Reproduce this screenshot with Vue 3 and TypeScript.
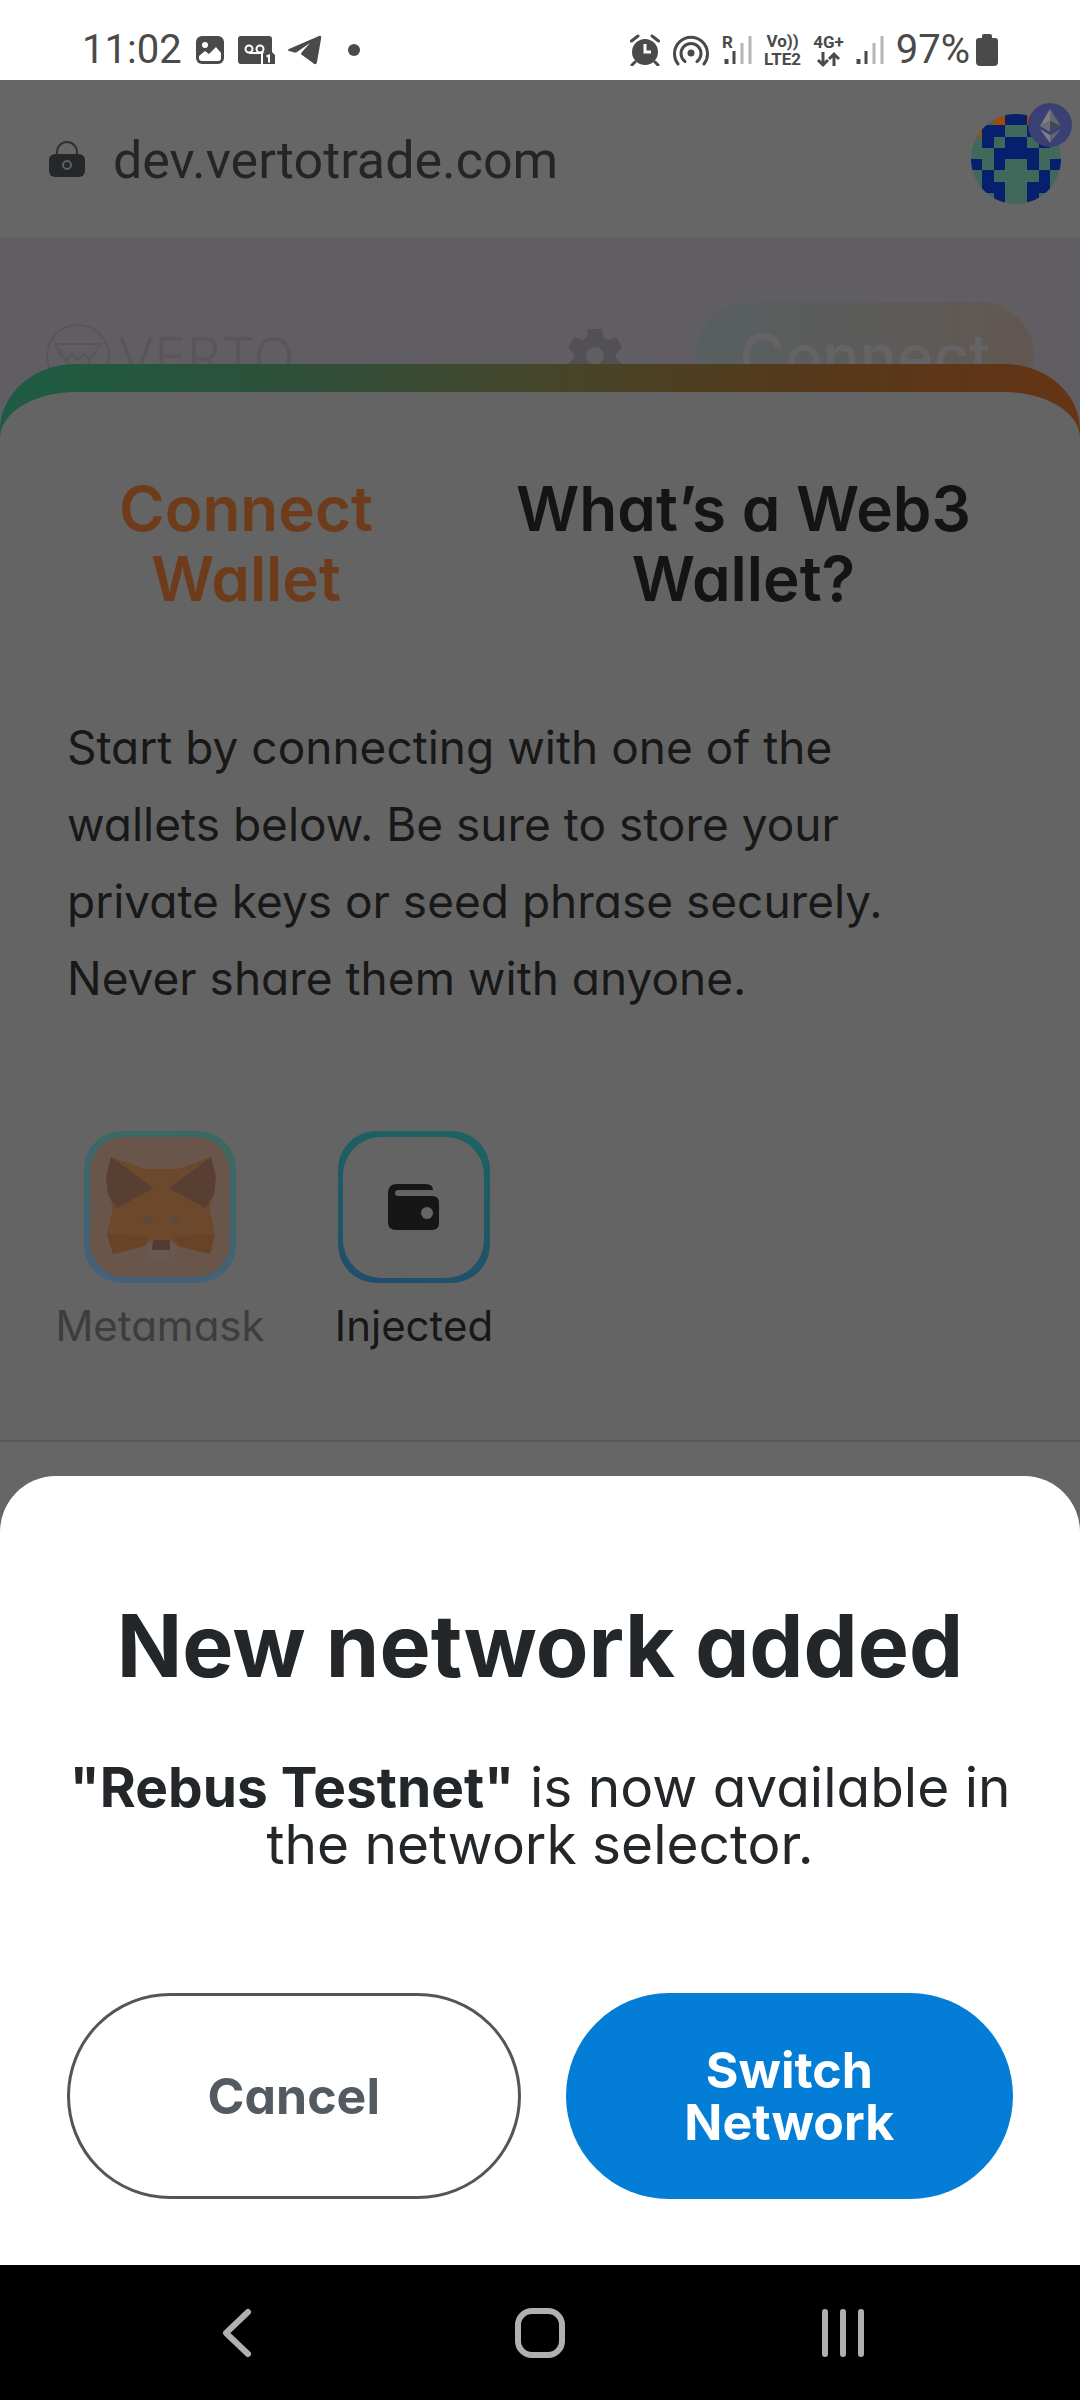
<script setup lang="ts">
import { ref } from 'vue'

type Tab = 'connect' | 'about'

const tab = ref<Tab>('connect')

// One character per cell: g = green, b = blue, o = orange
const identicon: string[] = [
  'ggobbogg',
  'obbggbbo',
  'gbgbbgbg',
  'ggbbbbgg',
  'bgbggbgb',
  'gbggggbg',
  'gbbggbbg',
  'ggbggbgg',
]
const cellColors: Record<string, string> = { g: '#42685b', b: '#06206e', o: '#a04a0b' }
const cells = identicon.flatMap((row, y) =>
  row.split('').map((c, x) => ({ x, y, fill: cellColors[c] })),
)
</script>

<template>
  <div class="screen">
    <header class="status">
      <div class="status-left">
        <span class="status-text">11:02</span>
        <svg width="30" height="30" viewBox="0 0 30 30" aria-hidden="true">
          <rect x="1" y="1" width="28" height="28" rx="6" fill="#4a4a4a" />
          <circle cx="10" cy="10" r="3" fill="#fff" />
          <path d="M4 21l6-5 4 3 7-7 5 6v5q0 3-3 3H7q-3 0-3-3z" fill="#fff" />
        </svg>
        <svg width="37" height="30" viewBox="0 0 37 30" aria-hidden="true">
          <rect x="0" y="1" width="34" height="28" rx="3" fill="#4a4a4a" />
          <circle cx="11" cy="14" r="3.500" fill="none" stroke="#fff" stroke-width="2" />
          <circle cx="22" cy="14" r="3.500" fill="none" stroke="#fff" stroke-width="2" />
          <path d="M11 18h12" stroke="#fff" stroke-width="2" />
          <path d="M23 30V17h14v13z" fill="#fff" />
          <path d="M25 19q0-2 2-2h7l3 3v9H25z" fill="#4a4a4a" />
          <path d="M28.500 21.500l2.500-1v7" fill="none" stroke="#fff" stroke-width="2" />
        </svg>
        <svg width="34" height="30" viewBox="0 0 34 30" aria-hidden="true">
          <path d="M1 14L31 1q3-1 2 3l-4 23q-1 4-4 1l-11-8q-2-1 0-3l8-9-13 9q-2 1-4 0l-4-1q-2-1 0-2z" fill="#4a4a4a" />
        </svg>
        <span class="dot"></span>
      </div>
      <div class="status-right">
        <svg width="30" height="32" viewBox="0 0 30 32" aria-hidden="true">
          <circle cx="15" cy="18" r="13" fill="#4a4a4a" />
          <path d="M1.500 7L8 2M28.500 7L22 2M5 28l-3 3M25 28l3 3" stroke="#4a4a4a" stroke-width="3" stroke-linecap="round" />
          <path d="M15 10v8h6" fill="none" stroke="#fff" stroke-width="3" />
        </svg>
        <svg width="38" height="32" viewBox="0 0 38 32" aria-hidden="true">
          <circle cx="19" cy="19" r="3.500" fill="#4a4a4a" />
          <g fill="none" stroke="#4a4a4a" stroke-width="3" stroke-linecap="round">
            <path d="M13 27.500a10 10 0 1 1 12 0" />
            <path d="M6 30a16.500 16.500 0 1 1 26 0" />
          </g>
        </svg>
        <svg class="signal" width="30" height="32" viewBox="0 0 30 32" aria-hidden="true">
          <path d="M4.500 25v5" stroke="#4a4a4a" stroke-width="4" />
          <path d="M12 17v13" stroke="#4a4a4a" stroke-width="3" />
          <path d="M20 9v21M28 2v28" stroke="#b5b5b5" stroke-width="3" />
          <text x="0" y="14" class="roam">R</text>
        </svg>
        <span class="tiny"><span>Vo))</span><span>LTE2</span></span>
        <span class="tiny">
          <span>4G+</span>
          <svg width="24" height="17" viewBox="0 0 24 17" aria-hidden="true">
            <path d="M7 1v13M2 9l5 5 5-5M18 15V3M13 8l5-5 5 5" fill="none" stroke="#4a4a4a" stroke-width="3" />
          </svg>
        </span>
        <svg class="signal" width="28" height="32" viewBox="0 0 28 32" aria-hidden="true">
          <path d="M2.500 25v5" stroke="#4a4a4a" stroke-width="4" />
          <path d="M10 17v13" stroke="#4a4a4a" stroke-width="3" />
          <path d="M18 9v21M26 2v28" stroke="#b5b5b5" stroke-width="3" />
        </svg>
        <span class="battery">
          <span class="status-text">97%</span>
          <svg width="22" height="32" viewBox="0 0 22 32" aria-hidden="true">
            <path d="M6 4V2q0-2 2-2h6q2 0 2 2v2h3q3 0 3 3v21q0 4-4 4H4q-4 0-4-4V7q0-3 3-3z" fill="#4a4a4a" />
          </svg>
        </span>
      </div>
    </header>

    <div class="browser">
      <svg width="36" height="37" viewBox="0 0 36 37" aria-hidden="true">
        <path d="M8 16v-4a10 10 0 0 1 20 0v4" fill="none" stroke="#2e3134" stroke-width="2" />
        <rect x="0" y="14" width="36" height="23" rx="6" fill="#25282b" />
        <ellipse cx="18" cy="25" rx="4" ry="4" fill="none" stroke="#5f6264" stroke-width="2" />
      </svg>
      <span class="url">dev.vertotrade.com</span>
      <button class="account" aria-label="Account">
        <svg class="identicon" width="90" height="90" viewBox="0 0 8 8" shape-rendering="crispEdges" aria-hidden="true">
          <rect v-for="c in cells" :key="`${c.x}-${c.y}`" :x="c.x" :y="c.y" width="1" height="1" :fill="c.fill" />
        </svg>
        <svg class="eth" width="44" height="44" viewBox="0 0 44 44" aria-hidden="true">
          <circle cx="22" cy="22" r="22" fill="#3a4074" />
          <path d="M22 6L12 23l10-5z" fill="#808080" />
          <path d="M22 6l11 17-11-5z" fill="#66676f" />
          <path d="M12 23l10-5v11z" fill="#6c6d76" />
          <path d="M33 23l-11-5v11z" fill="#44475c" />
          <path d="M12 26l10 6v8z" fill="#808080" />
          <path d="M33 26l-11 6v8z" fill="#62636e" />
        </svg>
      </button>
    </div>

    <main class="page">
      <div class="site-header">
        <span class="brand">
          <svg width="64" height="64" viewBox="0 0 64 64" fill="none" stroke="#58565a" stroke-width="2" aria-hidden="true">
            <circle cx="32" cy="32" r="31" />
            <path d="M9 20h46L32 54zM12 28l8 8 6-6 6 6 6-6 6 6" />
          </svg>
          <span>VERTO</span>
        </span>
        <button class="gear" aria-label="Settings">
          <svg width="54" height="54" viewBox="0 0 54 54" aria-hidden="true">
            <path
              d="M20 0h14l1 8 5 3 8-3 6 11-6 6v4l6 6-6 11-8-3-5 3-1 8H20l-1-8-5-3-8 3-6-11 6-6v-4l-6-6L6 8l8 3 5-3z"
              fill="#525056"
            />
            <circle cx="27" cy="27" r="9" fill="#5f5f60" />
          </svg>
        </button>
        <button class="connect">Connect</button>
      </div>

      <section class="modal">
        <div class="modal-body">
          <nav class="tabs">
            <button :class="{ active: tab === 'connect' }" @click="tab = 'connect'">Connect<br />Wallet</button>
            <button :class="{ active: tab === 'about' }" @click="tab = 'about'">What’s a Web3<br />Wallet?</button>
          </nav>
          <p class="intro">
            Start by connecting with one of the<br />wallets below. Be sure to store your<br />private keys or seed
            phrase securely.<br />Never share them with anyone.
          </p>
          <div class="wallets">
            <button class="wallet muted">
              <svg width="152" height="152" viewBox="0 0 152 152" aria-hidden="true">
                <defs>
                  <linearGradient id="metaEdge" x1="0.6" y1="0" x2="0.4" y2="1">
                    <stop offset="0" stop-color="#3b6962" />
                    <stop offset="1" stop-color="#43617b" />
                  </linearGradient>
                </defs>
                <rect width="152" height="152" rx="38" fill="url(#metaEdge)" />
                <rect x="6" y="6" width="140" height="140" rx="34" fill="#69554a" />
                <path d="M27 26l33 12h34l33-12 4 30-6 21 6 26-5 20-33-8-5 8H65l-5-8-31 8-6-20 6-26-6-21z" fill="#6c482d" />
                <path d="M27 26l42 31-36 20-9-13-2-18z" fill="#593f32" />
                <path d="M127 26L85 57l36 20 9-13 2-18z" fill="#593f32" />
                <path d="M23 103l42 2-5 10-31 8zM131 103l-42 2 5 10 32 8z" fill="#694328" />
                <path d="M60 115l8-6h18l8 6-4 12q-1 3-4 3H68q-3 0-4-3z" fill="#69584f" />
                <path d="M56 89l8-4 5 8zM98 89l-8-4-5 8z" fill="#594a40" />
                <path d="M69 109h17v10H68z" fill="#533b35" />
              </svg>
              <span>Metamask</span>
            </button>
            <button class="wallet">
              <svg width="152" height="152" viewBox="0 0 152 152" aria-hidden="true">
                <defs>
                  <linearGradient id="injEdge" x1="0.6" y1="0" x2="0.4" y2="1">
                    <stop offset="0" stop-color="#1d6261" />
                    <stop offset="1" stop-color="#214f6b" />
                  </linearGradient>
                </defs>
                <rect width="152" height="152" rx="38" fill="url(#injEdge)" />
                <rect x="5" y="6" width="141" height="141" rx="38" fill="#646464" />
                <path
                  d="M59 53h28q8 0 8 6H60q-3 0-3 3t3 3h34q7 0 7 7v20q0 7-7 7H58q-8 0-8-8V62q0-9 9-9z"
                  fill="#161616"
                />
                <circle cx="89" cy="82" r="6" fill="#666" />
              </svg>
              <span>Injected</span>
            </button>
          </div>
        </div>
      </section>
      <div class="modal-foot"></div>

      <section class="sheet">
        <h1>New network added</h1>
        <p><strong>"Rebus Testnet"</strong> is now available in<br />the network selector.</p>
        <div class="actions">
          <button class="cancel">Cancel</button>
          <button class="switch">Switch<br />Network</button>
        </div>
      </section>
    </main>

    <nav class="system">
      <button aria-label="Back">
        <svg width="30" height="50" viewBox="0 0 30 50" aria-hidden="true">
          <path d="M26 4L4 25l22 21" fill="none" stroke="#b0b0b0" stroke-width="6" stroke-linecap="round" stroke-linejoin="round" />
        </svg>
      </button>
      <button aria-label="Home">
        <svg width="50" height="50" viewBox="0 0 50 50" aria-hidden="true">
          <rect x="3" y="3" width="44" height="44" rx="14" fill="none" stroke="#b0b0b0" stroke-width="6" />
        </svg>
      </button>
      <button aria-label="Recent apps">
        <svg width="44" height="50" viewBox="0 0 44 50" aria-hidden="true">
          <path d="M4 4v42M22 4v42M40 4v42" stroke="#b0b0b0" stroke-width="6" stroke-linecap="round" />
        </svg>
      </button>
    </nav>
  </div>
</template>

<style>
body {
  margin: 0;
}
</style>

<style scoped>
.screen {
  display: flex;
  flex-direction: column;
  min-height: 100vh;
  background: #000;
  font-family: Inter, "Liberation Sans", sans-serif;
  font-feature-settings: "cv11";
}

button {
  padding: 0;
  border: 0;
  background: none;
  font: inherit;
  font-feature-settings: inherit;
  color: inherit;
  cursor: pointer;
}

svg {
  display: block;
  flex: none;
}

/* Status bar */
.status {
  display: flex;
  justify-content: space-between;
  height: 80px;
  box-sizing: border-box;
  padding: 20px 82px 0;
  background: #fff;
  color: #4a4a4a;
  font-family: Roboto, sans-serif;
}

.status-left,
.status-right,
.battery {
  display: flex;
  align-items: center;
  height: 60px;
}

.status-left {
  gap: 13px;
}

.status-right {
  gap: 12px;
}

.battery {
  gap: 6px;
}

.status-text {
  font-size: 40px;
  line-height: 60px;
}

.dot {
  width: 12px;
  height: 12px;
  margin-left: 13px;
  border-radius: 50%;
  background: #4a4a4a;
}

.tiny {
  display: flex;
  flex-direction: column;
  align-items: center;
  font-size: 17px;
  font-weight: 700;
  line-height: 18px;
}

.signal {
  overflow: visible;
}

.roam {
  font-size: 17px;
  font-weight: 700;
  fill: #4a4a4a;
}

/* Address bar */
.browser {
  display: flex;
  align-items: center;
  height: 157px;
  padding: 0 19px 0 49px;
  background: #666;
}

.url {
  flex: 1;
  margin-left: 28px;
  padding-top: 4px;
  font-family: Roboto, sans-serif;
  font-size: 52px;
  line-height: 64px;
  color: #252525;
}

.account {
  position: relative;
}

.identicon {
  border-radius: 50%;
}

.eth {
  position: absolute;
  top: -11px;
  right: -11px;
}

/* Page behind the sheet */
.page {
  display: flex;
  flex: 1;
  flex-direction: column;
  background: #605e62;
}

.site-header {
  display: flex;
  align-items: center;
  margin-bottom: -46px;
  padding: 65px 46px 0;
}

.brand {
  display: flex;
  flex: 1;
  align-items: center;
  gap: 8px;
  font-size: 54px;
  font-weight: 300;
  color: #58565a;
}

.gear {
  margin-right: 74px;
}

.connect {
  width: 338px;
  height: 108px;
  border-radius: 54px;
  background: linear-gradient(90deg, #585f60, #5c5c5a 50%, #625752);
  color: #656365;
  font-size: 62px;
  font-weight: 500;
}

.modal {
  position: relative;
  padding-top: 28px;
  border-radius: 76px 76px 0 0 / 66px 66px 0 0;
  background: linear-gradient(90deg, #1d5c43, #2f4f3a 28%, #45462a 50%, #55391c 74%, #653414);
}

.modal-body {
  padding: 82px 57px 0;
  border-radius: 76px 76px 0 0 / 46px 46px 0 0;
  background: #646464;
}

.tabs {
  display: flex;
  justify-content: space-between;
  padding: 0 52px 0 62px;
  font-size: 62px;
  font-weight: 600;
  line-height: 70px;
  color: #141414;
}

.tabs .active {
  color: #6e3c1a;
}

.intro {
  margin: 95px 0 0;
  padding-left: 10px;
  font-size: 46px;
  line-height: 77px;
  color: #181818;
}

.wallets {
  display: flex;
  margin: 114px -23px 0 -24px;
  padding-bottom: 89px;
}

.wallet {
  display: flex;
  flex-direction: column;
  align-items: center;
  gap: 18px;
  width: 254px;
  font-size: 42px;
  line-height: 50px;
  color: #171717;
}

.muted {
  color: #3d3d3d;
}

.modal-foot {
  height: 90px;
  border-top: 2px solid #5a5a5a;
  background: #666;
}

/* Bottom sheet */
.sheet {
  position: relative;
  flex: 1;
  margin-top: -56px;
  padding: 120px 67px 66px;
  border-radius: 56px 56px 0 0;
  background: #fff;
  color: #24272a;
  text-align: center;
}

.sheet h1 {
  margin: 0;
  font-size: 86px;
  font-weight: 700;
  line-height: 100px;
}

.sheet p {
  margin: 63px -10px 0;
  font-size: 55px;
  line-height: 57px;
}

.actions {
  display: flex;
  gap: 45px;
  margin-top: 120px;
}

.actions button {
  flex: 1;
  box-sizing: border-box;
  height: 206px;
  border-radius: 103px;
  font-size: 50px;
  font-weight: 700;
  line-height: 52px;
}

.actions .cancel {
  border: 3px solid #555;
  color: #535a61;
}

.actions .switch {
  background: #037dd6;
  color: #fff;
}

/* Android navigation */
.system {
  display: flex;
  height: 135px;
  padding: 0 86px;
  background: #000;
}

.system button {
  display: flex;
  flex: 1;
  align-items: center;
  justify-content: center;
}
</style>
